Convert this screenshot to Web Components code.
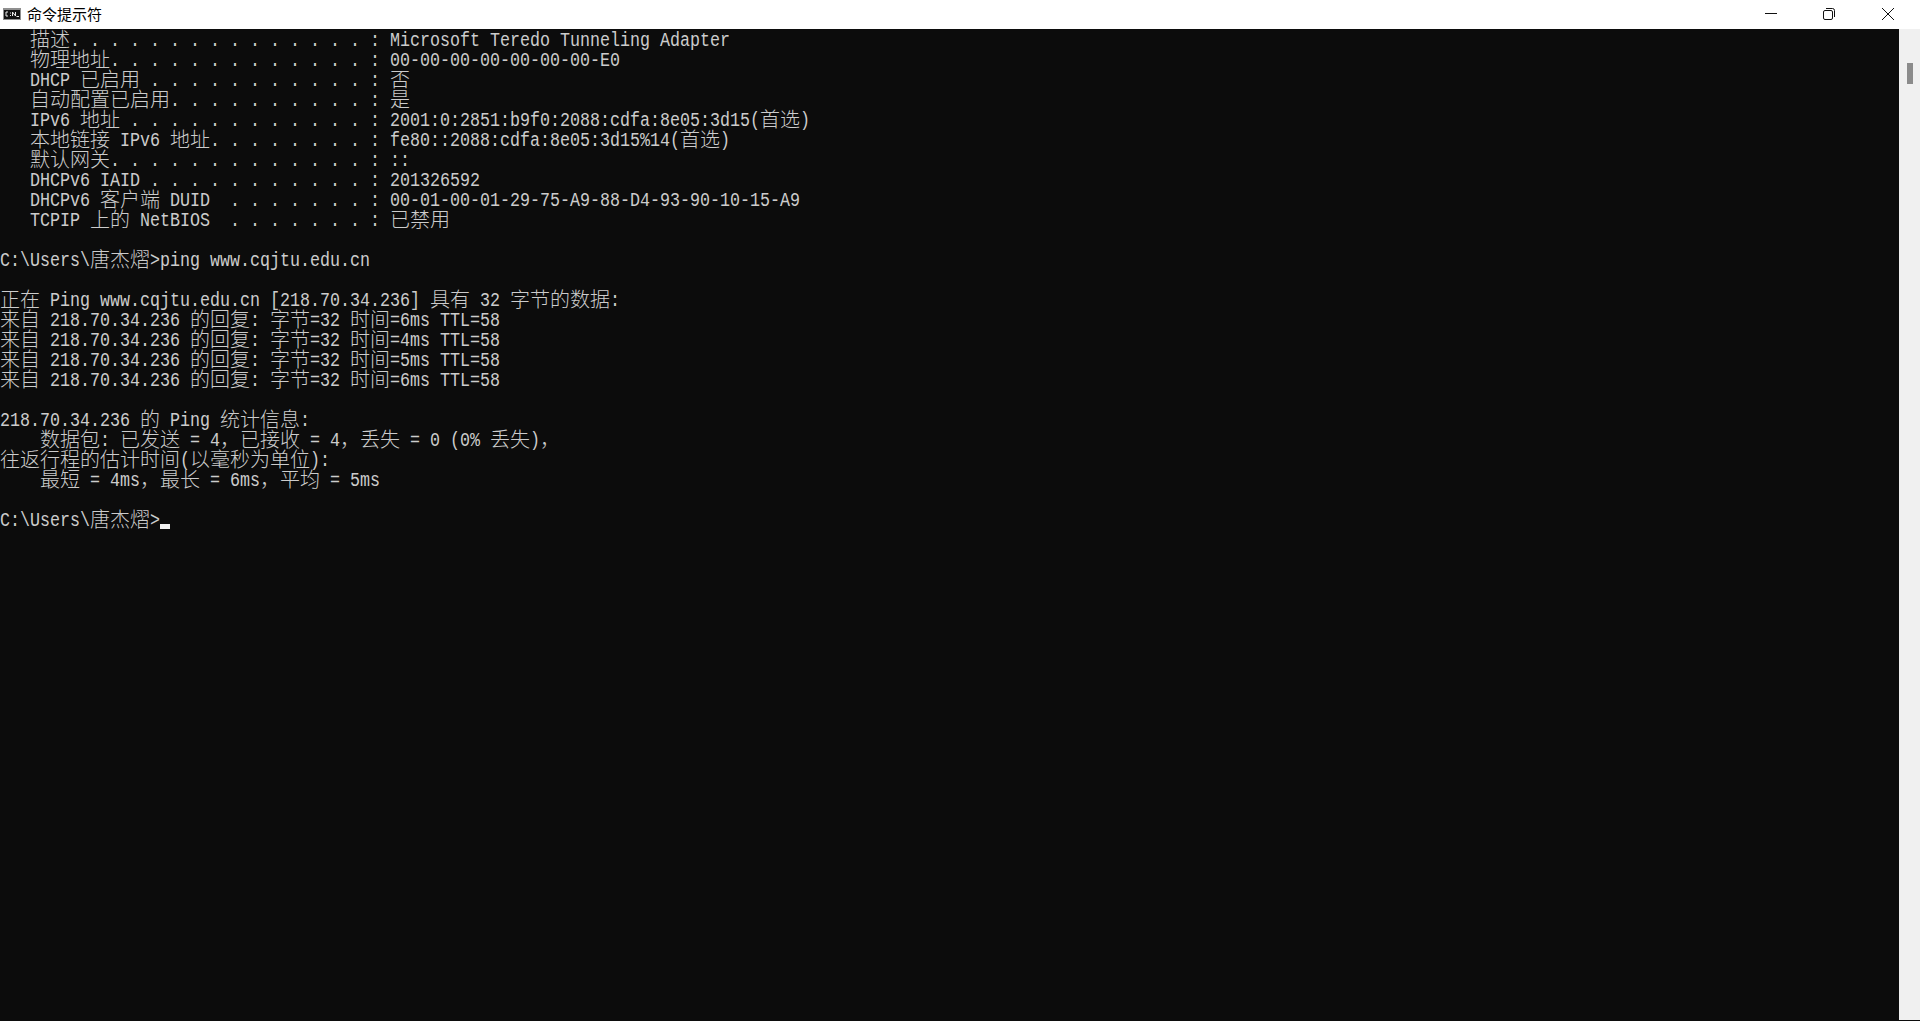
<!DOCTYPE html>
<html lang="zh-CN">
<head>
<meta charset="utf-8">
<title>命令提示符</title>
<style>
  html, body { margin: 0; height: 100%; background: #0c0c0c; overflow: hidden; }
</style>
</head>
<body>
<console-window title-text="命令提示符">
<term-line>   描述. . . . . . . . . . . . . . . : Microsoft Teredo Tunneling Adapter</term-line>
<term-line>   物理地址. . . . . . . . . . . . . : 00-00-00-00-00-00-00-E0</term-line>
<term-line>   DHCP 已启用 . . . . . . . . . . . : 否</term-line>
<term-line>   自动配置已启用. . . . . . . . . . : 是</term-line>
<term-line>   IPv6 地址 . . . . . . . . . . . . : 2001:0:2851:b9f0:2088:cdfa:8e05:3d15(首选)</term-line>
<term-line>   本地链接 IPv6 地址. . . . . . . . : fe80::2088:cdfa:8e05:3d15%14(首选)</term-line>
<term-line>   默认网关. . . . . . . . . . . . . : ::</term-line>
<term-line>   DHCPv6 IAID . . . . . . . . . . . : 201326592</term-line>
<term-line>   DHCPv6 客户端 DUID  . . . . . . . : 00-01-00-01-29-75-A9-88-D4-93-90-10-15-A9</term-line>
<term-line>   TCPIP 上的 NetBIOS  . . . . . . . : 已禁用</term-line>
<term-line></term-line>
<term-line>C:\Users\唐杰熠&gt;ping www.cqjtu.edu.cn</term-line>
<term-line></term-line>
<term-line>正在 Ping www.cqjtu.edu.cn [218.70.34.236] 具有 32 字节的数据:</term-line>
<term-line>来自 218.70.34.236 的回复: 字节=32 时间=6ms TTL=58</term-line>
<term-line>来自 218.70.34.236 的回复: 字节=32 时间=4ms TTL=58</term-line>
<term-line>来自 218.70.34.236 的回复: 字节=32 时间=5ms TTL=58</term-line>
<term-line>来自 218.70.34.236 的回复: 字节=32 时间=6ms TTL=58</term-line>
<term-line></term-line>
<term-line>218.70.34.236 的 Ping 统计信息:</term-line>
<term-line>    数据包: 已发送 = 4，已接收 = 4，丢失 = 0 (0% 丢失)，</term-line>
<term-line>往返行程的估计时间(以毫秒为单位):</term-line>
<term-line>    最短 = 4ms，最长 = 6ms，平均 = 5ms</term-line>
<term-line></term-line>
<term-line cursor>C:\Users\唐杰熠&gt;</term-line>
</console-window>

<script>
const WIDE = /([\u3000-\u303f\u4e00-\u9fff\uff00-\uffef]+)/;

class TermLine extends HTMLElement {
  constructor() {
    super();
    this.attachShadow({ mode: "open" });
  }

  connectedCallback() {
    // wide chars take a 20px cell, everything else a squeezed 10px one
    const runs = this.textContent.split(WIDE).filter((run) => run);
    const html = runs
      .map((run) => {
        if (WIDE.test(run)) return `<span class="wide">${run}</span>`;
        const safe = run.replace(/&/g, "&amp;").replace(/</g, "&lt;").replace(/>/g, "&gt;");
        return `<span class="narrow" style="width:${run.length * 10}px">${safe}</span>`;
      })
      .join("");
    this.shadowRoot.innerHTML = `
      <style>
        :host {
          display: flex;
          height: 20px;
          line-height: 20px;
          white-space: pre;
          font-size: 20px;
          color: #cccccc;
        }
        .narrow {
          display: block;
          flex: none;
          line-height: 24px;
          font-family: "Liberation Mono", monospace;
          transform: scaleX(0.8333);
          transform-origin: 0 0;
        }
        .wide {
          display: block;
          flex: none;
          font-family: "Noto Sans CJK SC", sans-serif;
          font-weight: 300;
        }
        .cursor { flex: none; width: 10px; height: 5px; margin-top: 15px; background: #f2f2f2; }
      </style>
      ${html}${this.hasAttribute("cursor") ? '<span class="cursor"></span>' : ""}
    `;
  }
}

class ConsoleWindow extends HTMLElement {
  constructor() {
    super();
    this.attachShadow({ mode: "open" });
    this.shadowRoot.innerHTML = `
      <style>
        :host {
          display: grid;
          grid-template-rows: 29px 1fr;
          height: 1021px;
          background: #0c0c0c;
        }
        .titlebar {
          display: flex;
          align-items: center;
          background: #fff;
          color: #000;
          font-family: "Noto Sans CJK SC", sans-serif;
          font-size: 15px;
          padding-right: 3px;
        }
        .app-icon { display: block; margin: 0 6px 1px 3px; }
        .title { flex: 1; line-height: 27px; height: 29px; }
        .btn { box-sizing: border-box; width: 58px; height: 28px; margin-bottom: 1px; display: flex; align-items: center; justify-content: center; }
        .btn.shifted { padding-right: 2px; }
        .btn svg { display: block; }
        .body { display: grid; grid-template-columns: 1fr 21px; min-height: 0; }
        .screen { overflow: hidden; }
        .scroll { background: #f0f0f0; display: flex; justify-content: center; align-items: flex-start; padding-top: 34px; margin-bottom: 1px; }
        .thumb { width: 6px; height: 21px; background: #8b8b8b; }
      </style>
      <div class="titlebar">
        <svg class="app-icon" width="18" height="12" viewBox="0 0 18 12">
          <rect width="18" height="12" fill="#8f8f8f"/>
          <rect x="1" y="2" width="16" height="9" fill="#111"/>
          <path d="M5 4H3v4h2M7.500 4.500v1M7.500 7v1M9.500 8V4l3 4V4M13.500 8.500H16" fill="none" stroke="#e8e8e8"/>
        </svg>
        <span class="title"></span>
        <div class="btn shifted"><svg width="12" height="12" viewBox="0 0 12 12"><path d="M0 5.500H12" stroke="#111"/></svg></div>
        <div class="btn shifted"><svg width="12" height="12" viewBox="0 0 12 12"><path d="M.5 4A1.500 1.500 0 0 1 2 2.500h6A1.500 1.500 0 0 1 9.500 4v6A1.500 1.500 0 0 1 8 11.500H2A1.500 1.500 0 0 1 .5 10zM3 .5h6.500A2 2 0 0 1 11.500 2.500V9" fill="none" stroke="#111"/></svg></div>
        <div class="btn"><svg width="12" height="12" viewBox="0 0 12 12"><path d="M0 0L12 12M12 0L0 12" stroke="#111"/></svg></div>
      </div>
      <div class="body">
        <div class="screen"><slot></slot></div>
        <div class="scroll"><div class="thumb"></div></div>
      </div>
    `;
    this.shadowRoot.querySelector(".title").textContent = this.getAttribute("title-text");
  }
}

customElements.define("term-line", TermLine);
customElements.define("console-window", ConsoleWindow);
</script>
</body>
</html>
